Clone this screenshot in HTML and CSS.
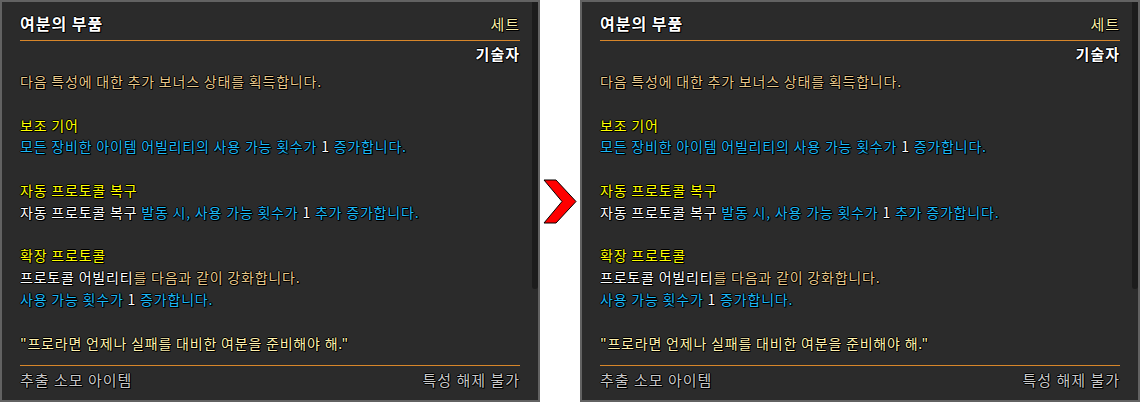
FILE: index.html
```html
<!DOCTYPE html>
<html>
<head>
  <title>여분의 부품</title>
  <link rel="stylesheet" href="styles.css">
</head>
<body>
  <div class="page">

    <div class="tooltip">
      <div class="tt-body">
        <div class="tt-head">
          <span class="tt-name">여분의 부품</span>
          <span class="tt-type">세트</span>
        </div>
        <div class="tt-rule"></div>
        <div class="tt-class">기술자</div>

        <p class="tt-desc tan">다음 특성에 대한 추가 보너스 상태를 획득합니다.</p>

        <div class="trait">
          <p class="trait-name">보조 기어</p>
          <p class="cyan">모든 장비한 아이템 어빌리티의 사용 가능 횟수가 <span class="white">1</span> 증가합니다.</p>
        </div>

        <div class="trait">
          <p class="trait-name">자동 프로토콜 복구</p>
          <p class="cyan"><span class="white">자동 프로토콜 복구</span> 발동 시, 사용 가능 횟수가 <span class="white">1</span> 추가 증가합니다.</p>
        </div>

        <div class="trait">
          <p class="trait-name">확장 프로토콜</p>
          <p class="tan"><span class="white">프로토콜 어빌리티</span>를 다음과 같이 강화합니다.</p>
          <p class="cyan">사용 가능 횟수가 <span class="white">1</span> 증가합니다.</p>
        </div>

        <p class="quote">"프로라면 언제나 실패를 대비한 여분을 준비해야 해."</p>

        <div class="tt-rule bottom"></div>
        <div class="tt-foot">
          <span>추출 소모 아이템</span>
          <span>특성 해제 불가</span>
        </div>
      </div>
      <div class="scroll"><div class="thumb"></div></div>
    </div>

    <div class="arrow">
      <svg width="34" height="45" viewBox="0 0 34 45">
        <polygon points="1,1 13,1 33,22.5 13,44 1,44 19,22.5" fill="#ff0000" stroke="#000" stroke-width="1"/>
      </svg>
    </div>

    <div class="tooltip wide">
      <div class="tt-body">
        <div class="tt-head">
          <span class="tt-name">여분의 부품</span>
          <span class="tt-type">세트</span>
        </div>
        <div class="tt-rule"></div>
        <div class="tt-class">기술자</div>

        <p class="tt-desc tan">다음 특성에 대한 추가 보너스 상태를 획득합니다.</p>

        <div class="trait">
          <p class="trait-name">보조 기어</p>
          <p class="cyan">모든 장비한 아이템 어빌리티의 사용 가능 횟수가 <span class="white">1</span> 증가합니다.</p>
        </div>

        <div class="trait">
          <p class="trait-name">자동 프로토콜 복구</p>
          <p class="cyan"><span class="white">자동 프로토콜 복구</span> 발동 시, 사용 가능 횟수가 <span class="white">1</span> 추가 증가합니다.</p>
        </div>

        <div class="trait">
          <p class="trait-name">확장 프로토콜</p>
          <p class="tan"><span class="white">프로토콜 어빌리티</span>를 다음과 같이 강화합니다.</p>
          <p class="cyan">사용 가능 횟수가 <span class="white">1</span> 증가합니다.</p>
        </div>

        <p class="quote">"프로라면 언제나 실패를 대비한 여분을 준비해야 해."</p>

        <div class="tt-rule bottom"></div>
        <div class="tt-foot">
          <span>추출 소모 아이템</span>
          <span>특성 해제 불가</span>
        </div>
      </div>
      <div class="scroll"><div class="thumb"></div></div>
    </div>

  </div>
</body>
</html>
```

FILE: styles.css
```css
body {
  margin: 0;
  padding: 0;
  background-color: #ffffff;
  font-family: "Noto Sans CJK KR", "Noto Sans", sans-serif;
}

.page {
  display: flex;
  height: 402px;
}

.tooltip {
  display: flex;
  width: 540px;
  height: 402px;
  box-sizing: border-box;
  border: 2px solid #626262;
  background-color: #2b2b2b;
  color: #ffffff;
  font-size: 14px;
  letter-spacing: 0.8px;
  text-shadow: -1px 0 #000, 1px 0 #000, 0 -1px #000, 0 1px #000, 1px 1px #000;
}

.tooltip.wide {
  width: 560px;
}

.tt-body {
  flex: 1;
  padding: 10px 12px 0 18px;
}

.tt-head {
  display: flex;
  justify-content: space-between;
  align-items: baseline;
  line-height: 22px;
}

.tt-name {
  font-size: 16px;
  font-weight: bold;
  letter-spacing: 1px;
}

.tt-type {
  font-size: 15px;
  letter-spacing: 1px;
  color: #f6eca6;
}

.tt-rule {
  height: 1px;
  margin-top: 5px;
  background-color: #d8862a;
}

.tt-rule.bottom {
  margin-top: 11px;
}

.tt-class {
  margin-top: 2px;
  line-height: 22px;
  font-size: 15px;
  text-align: right;
  font-weight: bold;
  letter-spacing: 1px;
}

p {
  margin: 0;
  line-height: 21.8px;
}

.tt-desc {
  margin-top: 6px;
}

.trait {
  margin-top: 21.8px;
}

.trait-name {
  color: #ffff00;
}

.tan {
  color: #e6c78b;
}

.cyan {
  color: #1cb8f6;
}

.white {
  color: #ffffff;
}

.quote {
  margin-top: 21.8px;
  color: #fff2ae;
}

.tt-foot {
  display: flex;
  justify-content: space-between;
  margin-top: 3px;
  line-height: 22px;
  font-size: 15px;
  letter-spacing: 1px;
  color: #c8c8c8;
}

.scroll {
  width: 6px;
}

.thumb {
  height: 287px;
  background-color: #1c1c1c;
  border-radius: 0 0 3px 3px;
}

.arrow {
  display: flex;
  align-items: center;
  justify-content: center;
  width: 40px;
}
```
